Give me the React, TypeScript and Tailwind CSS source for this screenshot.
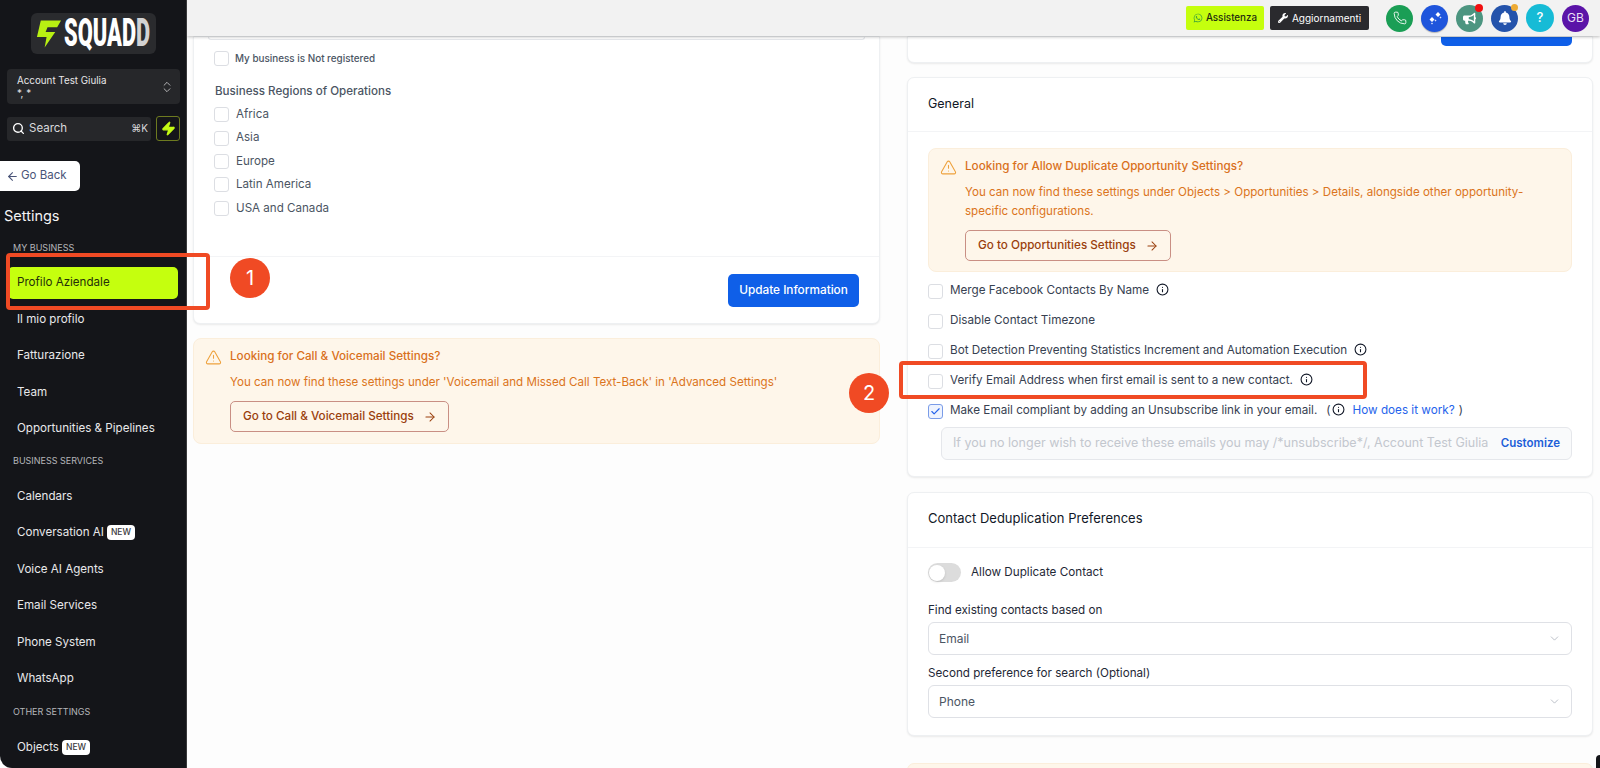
import React from "react";
import {
  ArrowLeft,
  ArrowRight,
  Check,
  ChevronDown,
  ChevronsUpDown,
  Info,
  Phone,
  Search,
  TriangleAlert,
  Zap,
} from "lucide-react";
import { FaBell, FaBullhorn, FaWhatsapp, FaWrench } from "react-icons/fa";

function SideItem({ label, isNew }: { label: string; isNew?: boolean }) {
  return (
    <div className="flex h-[36.5px] items-center gap-[3px] pl-[17px] text-[11.6px] font-normal text-[#e8e8ea]">
      <span>{label}</span>
      {isNew && (
        <span className="rounded-[4px] bg-white px-[4px] py-[2px] text-[8.5px] leading-[11px] font-medium text-[#3a3a40]">
          NEW
        </span>
      )}
    </div>
  );
}

function SideHeading({ label, className }: { label: string; className: string }) {
  return (
    <div className={`h-[12px] pl-[13px] text-[9px] leading-[12px] text-[#b4b5b9] uppercase ${className}`}>{label}</div>
  );
}

function Sidebar() {
  return (
    <aside className="relative flex h-full w-[187px] shrink-0 flex-col rounded-bl-[12px] border-r border-[#3a3a3c] bg-[#141519]">
      <div className="mt-[13px] ml-[31px] flex h-[41px] w-[125px] items-center gap-[2px] rounded-[6px] bg-[#2a2b2e] pl-[4px]">
        <svg viewBox="0 0 28 30" className="h-[30px] w-[27px] shrink-0">
          <path d="M6 1h21l-4 7H13l-2 5h10L10 29l2-11H2z" fill="#b8f012" />
        </svg>
        <span className="w-[87px] origin-left scale-x-[.56] font-['Roboto',sans-serif] text-[39px] leading-none font-black whitespace-nowrap text-white">
          SQUAD<span className="text-[#d2d2d2]">D</span>
        </span>
      </div>

      <div className="mt-[15px] mr-[6px] ml-[7px] flex h-[35px] items-center justify-between rounded-[4px] bg-[#26272a] pr-[6px] pl-[10px] text-[#e6e6e8]">
        <div className="text-[9.8px] leading-[13px]">
          <div>Account Test Giulia</div>
          <div>*, *</div>
        </div>
        <ChevronsUpDown size={14} strokeWidth={1.25} />
      </div>

      <div className="mt-[12px] mr-[6px] ml-[7px] flex h-[25px] items-center gap-[5px]">
        <div className="flex h-[24px] flex-1 items-center rounded-[3px] bg-[#26272a] pr-[3px] pl-[5px] text-[11.5px] text-[#d9d9dc]">
          <Search size={13} strokeWidth={2.5} className="text-white" />
          <span className="ml-[4px]">Search</span>
          <span className="ml-auto text-[10px]">⌘K</span>
        </div>
        <div className="flex h-[25px] w-[24px] items-center justify-center rounded-[3px] border border-[#6d7a20] bg-[#141519]">
          <Zap size={15} fill="#c4fb14" stroke="#c4fb14" />
        </div>
      </div>

      <div className="mt-[20px] flex h-[30px] w-[80px] items-center gap-[2px] rounded-r-[5px] bg-white pl-[6px] text-[11.5px] text-[#4a5478]">
        <ArrowLeft size={13} strokeWidth={2} />
        <span>Go Back</span>
      </div>

      <div className="mt-[15px] h-[20px] pl-[4px] text-[14.5px] leading-[20px] font-normal text-[#f4f4f5]">Settings</div>

      <SideHeading label="My Business" className="mt-[16px]" />
      <div className="mx-[8px] mt-[13px] flex h-[32px] items-center rounded-[5px] bg-[#c5ff0e] pl-[9px] text-[11.6px] text-[#24300a]">
        Profilo Aziendale
      </div>
      <div className="mt-[2px]">
        <SideItem label="Il mio profilo" />
        <SideItem label="Fatturazione" />
        <SideItem label="Team" />
        <SideItem label="Opportunities & Pipelines" />
      </div>

      <SideHeading label="Business Services" className="mt-[8px]" />
      <div className="mt-[11px]">
        <SideItem label="Calendars" />
        <SideItem label="Conversation AI" isNew />
        <SideItem label="Voice AI Agents" />
        <SideItem label="Email Services" />
        <SideItem label="Phone System" />
        <SideItem label="WhatsApp" />
      </div>

      <SideHeading label="Other Settings" className="mt-[9px]" />
      <div className="mt-[11px]">
        <SideItem label="Objects" isNew />
      </div>
    </aside>
  );
}

function TopBar() {
  return (
    <header className="relative z-10 flex h-[36px] shrink-0 items-center justify-end bg-[#f2f2f2] pr-[11px] shadow-[0_1px_3px_rgba(0,0,0,0.25)]">
      <div className="flex h-[24px] w-[78px] items-center justify-center gap-[3px] rounded-[2px] bg-[#c5ff0e] text-[9.8px] font-medium text-[#1d2a10]">
        <FaWhatsapp size={10} className="text-[#43a53b]" />
        Assistenza
      </div>
      <div className="ml-[6px] flex h-[24px] w-[99px] items-center justify-center gap-[4px] rounded-[2px] bg-[#2a2a2e] text-[10px] text-white">
        <FaWrench size={10} />
        Aggiornamenti
      </div>
      <div className="ml-[17px] flex h-[27px] w-[27px] items-center justify-center rounded-full bg-[#1a9e55] text-white">
        <Phone size={14} strokeWidth={1.5} />
      </div>
      <div className="ml-[8px] flex h-[27px] w-[27px] items-center justify-center rounded-full bg-[#1f55dc] shadow-[0_1px_1px_rgba(0,0,0,0.25)]">
        <svg viewBox="0 0 16 16" className="h-[16px] w-[16px]" fill="white">
          <path d="M5 7l2.500 2.500L5 12 2.500 9.500zM11 2l2.500 2.500L11 7 8.500 4.500z" />
          <path d="M8.500 9.500l1 1-1 1-1-1zM5 12.500l1 1-1 1-1-1zM13.500 6.500l1 1-1 1-1-1z" opacity=".85" />
        </svg>
      </div>
      <div className="relative ml-[8px] flex h-[27px] w-[27px] items-center justify-center rounded-full bg-[#4c9580] text-white">
        <FaBullhorn size={13} />
        <span className="absolute -top-[1px] right-0 h-[8px] w-[8px] rounded-full bg-[#f00f0f]" />
      </div>
      <div className="relative ml-[8px] flex h-[27px] w-[27px] items-center justify-center rounded-full bg-[#2453ab] text-white">
        <FaBell size={14} />
        <span className="absolute -top-[1px] right-0 h-[7px] w-[7px] rounded-full bg-[#eeac35]" />
      </div>
      <div className="ml-[8px] flex h-[28px] w-[28px] items-center justify-center rounded-full bg-[#16bbd6] text-[13px] font-medium text-white">
        ?
      </div>
      <div className="ml-[8px] flex h-[27px] w-[27px] items-center justify-center rounded-full bg-[#5b14a8] text-[12px] text-[#e9dff5]">
        GB
      </div>
    </header>
  );
}

function CheckBox({ checked }: { checked?: boolean }) {
  return (
    <span
      className={`flex h-[15px] w-[15px] shrink-0 items-center justify-center rounded-[3px] border ${
        checked ? "border-[#7a9ce8] bg-[#eef3fe]" : "border-[#dcdee3] bg-white"
      }`}
    >
      {checked && <Check size={11} strokeWidth={2.5} className="text-[#2563eb]" />}
    </span>
  );
}

function InfoMark() {
  return <Info size={13} strokeWidth={2} className="-mt-[3px] shrink-0 text-[#111827]" />;
}

function RegionRow({ label }: { label: string }) {
  return (
    <div className="flex h-[23.4px] items-center gap-[7px] text-[11.6px] text-[#4b5563]">
      <CheckBox />
      {label}
    </div>
  );
}

function Notice({
  title,
  button,
  className,
  children,
}: {
  title: string;
  button: string;
  className: string;
  children: React.ReactNode;
}) {
  return (
    <div className={`rounded-[8px] border border-[#fbeedb] bg-[#fef6ea] pr-[12px] pl-[11px] ${className}`}>
      <div className="flex h-[18px] items-center gap-[8px] text-[11.7px] font-medium text-[#d9701c]">
        <TriangleAlert size={17} strokeWidth={1.5} className="shrink-0 text-[#eea13c]" />
        {title}
      </div>
      <div className="mt-[7px] ml-[25px] text-[11.6px] leading-[19px] text-[#db7420]">{children}</div>
      <div className="mt-[9px] ml-[25px] flex h-[31px] w-fit items-center gap-[9px] rounded-[5px] border border-[#c98f84] pr-[11px] pl-[12px] text-[11.7px] font-medium text-[#9a3f0d]">
        {button}
        <ArrowRight size={14} strokeWidth={1.75} />
      </div>
    </div>
  );
}

function OptionRow({ children }: { children: React.ReactNode }) {
  return <div className="flex h-[30px] items-center gap-[7px] text-[11.7px] whitespace-nowrap text-[#374151]">{children}</div>;
}

function SelectBox({ value }: { value: string }) {
  return (
    <div className="mt-[4px] flex h-[33px] items-center justify-between rounded-[6px] border border-[#dfe1e6] bg-white pr-[10px] pl-[10px] text-[12px] text-[#4b5563]">
      {value}
      <ChevronDown size={13} strokeWidth={1.25} className="text-[#9ca3af]" />
    </div>
  );
}

function Card({ className, children }: { className?: string; children: React.ReactNode }) {
  return (
    <div className={`rounded-[7px] border border-[#eef0f2] bg-white shadow-[0_1px_2px_rgba(0,0,0,0.08)] ${className ?? ""}`}>
      {children}
    </div>
  );
}

function LeftColumn() {
  return (
    <div className="flex w-[687px] shrink-0 flex-col">
      <Card className="h-[288px] rounded-t-none">
        <div className="mx-[14px] h-[3px] rounded-b-[6px] border border-t-0 border-[#e5e7eb]" />
        <div className="flex h-[36px] items-center gap-[6px] pl-[20px] text-[9.9px] font-medium text-[#4b5563]">
          <CheckBox />
          My business is Not registered
        </div>
        <div className="mt-[7px] pl-[21px] text-[11.6px] leading-[16px] font-medium text-[#4b5563]">
          Business Regions of Operations
        </div>
        <div className="mt-[4px] pl-[20px]">
          <RegionRow label="Africa" />
          <RegionRow label="Asia" />
          <RegionRow label="Europe" />
          <RegionRow label="Latin America" />
          <RegionRow label="USA and Canada" />
        </div>
        <div className="mt-[36px] flex h-[69px] justify-end border-t border-[#f3f4f6] pt-[17px] pr-[20px]">
          <div className="flex h-[33px] w-[131px] items-center justify-center rounded-[5px] bg-[#0f5fe8] text-[11.8px] font-medium text-white">
            Update Information
          </div>
        </div>
      </Card>
      <Notice
        title="Looking for Call & Voicemail Settings?"
        button="Go to Call & Voicemail Settings"
        className="mt-[14px] h-[106px] pt-[9px]"
      >
        You can now find these settings under &apos;Voicemail and Missed Call Text-Back&apos; in &apos;Advanced Settings&apos;
      </Notice>
    </div>
  );
}

function RightColumn() {
  return (
    <div className="flex w-[686px] shrink-0 flex-col">
      <Card className="flex h-[27px] justify-end rounded-t-none pr-[20px]">
        <div className="h-[9px] w-[131px] rounded-b-[5px] bg-[#0f5fe8]" />
      </Card>

      <Card className="mt-[14px] h-[400px]">
        <div className="flex h-[54px] items-center border-b border-[#f3f4f6] pb-[1px] pl-[20px] text-[12.5px] font-normal text-[#111827]">
          General
        </div>
        <div className="px-[20px] pt-[16px]">
          <Notice
            title="Looking for Allow Duplicate Opportunity Settings?"
            button="Go to Opportunities Settings"
            className="h-[124px] pt-[9px]"
          >
            You can now find these settings under Objects &gt; Opportunities &gt; Details, alongside other opportunity-specific
            configurations.
          </Notice>
          <div className="mt-[4px]">
            <OptionRow>
              <CheckBox />
              Merge Facebook Contacts By Name
              <InfoMark />
            </OptionRow>
            <OptionRow>
              <CheckBox />
              Disable Contact Timezone
            </OptionRow>
            <OptionRow>
              <CheckBox />
              Bot Detection Preventing Statistics Increment and Automation Execution
              <InfoMark />
            </OptionRow>
            <OptionRow>
              <CheckBox />
              Verify Email Address when first email is sent to a new contact.
              <InfoMark />
            </OptionRow>
            <OptionRow>
              <CheckBox checked />
              <span>Make Email compliant by adding an Unsubscribe link in your email.</span>
              <span className="ml-[2px] flex items-center gap-[1px]">
                (
                <InfoMark />
                <span className="ml-[7px] mr-[3px] text-[#2563eb]">How does it work?</span>)
              </span>
            </OptionRow>
          </div>
          <div className="mt-[1px] ml-[13px] flex h-[33px] items-center justify-between rounded-[6px] border border-[#e5e7eb] bg-[#f9fafb] pr-[11px] pl-[11px] text-[12.5px] whitespace-nowrap text-[#c3c7ce]">
            <span>If you no longer wish to receive these emails you may /*unsubscribe*/, Account Test Giulia</span>
            <span className="text-[11.5px] font-semibold text-[#1d5fd8]">Customize</span>
          </div>
        </div>
      </Card>

      <Card className="mt-[15px] h-[244px]">
        <div className="flex h-[55px] items-center border-b border-[#f3f4f6] pb-[3px] pl-[20px] text-[13px] font-normal text-[#111827]">
          Contact Deduplication Preferences
        </div>
        <div className="px-[20px] pt-[15px]">
          <div className="flex h-[19px] items-center gap-[10px] text-[11.7px] text-[#1f2937]">
            <span className="flex h-[19px] w-[33px] items-center rounded-full bg-[#dcdcdc] pl-[1px]">
              <span className="h-[16px] w-[16px] rounded-full bg-white shadow-sm" />
            </span>
            Allow Duplicate Contact
          </div>
          <div className="mt-[20px] h-[16px] text-[11.65px] leading-[16px] text-[#1f2937]">Find existing contacts based on</div>
          <SelectBox value="Email" />
          <div className="mt-[10px] h-[16px] text-[11.65px] leading-[16px] text-[#1f2937]">Second preference for search (Optional)</div>
          <SelectBox value="Phone" />
        </div>
      </Card>

      <div className="mt-[27px] h-[20px] rounded-t-[7px] border border-[#fbeedb] bg-[#fef6ea]" />
    </div>
  );
}

export default function App() {
  return (
    <div className="relative flex h-screen w-full overflow-hidden bg-white font-['Inter',sans-serif]">
      <Sidebar />
      <main className="flex min-w-0 flex-1 flex-col overflow-hidden bg-[#fdfdfd]">
        <TopBar />
        <div className="flex gap-[27px] pl-[6px]">
          <LeftColumn />
          <RightColumn />
        </div>
      </main>

      {/* screenshot annotations */}
      <div className="absolute top-[253px] left-[6px] h-[57px] w-[204px] rounded-[4px] border-[4px] border-[#f04a24]" />
      <div className="absolute top-[258px] left-[230px] flex h-[40px] w-[40px] items-center justify-center rounded-full bg-[#f04a24] text-[20px] text-white">
        1
      </div>
      <div className="absolute top-[361px] left-[899px] h-[38px] w-[468px] rounded-[4px] border-[4px] border-[#f04a24]" />
      <div className="absolute top-[373px] left-[849px] flex h-[40px] w-[40px] items-center justify-center rounded-full bg-[#f04a24] text-[20px] text-white">
        2
      </div>
      <div className="absolute right-0 bottom-0 h-[13px] w-[4px] rounded-tl-full bg-[#141519]" />
    </div>
  );
}
